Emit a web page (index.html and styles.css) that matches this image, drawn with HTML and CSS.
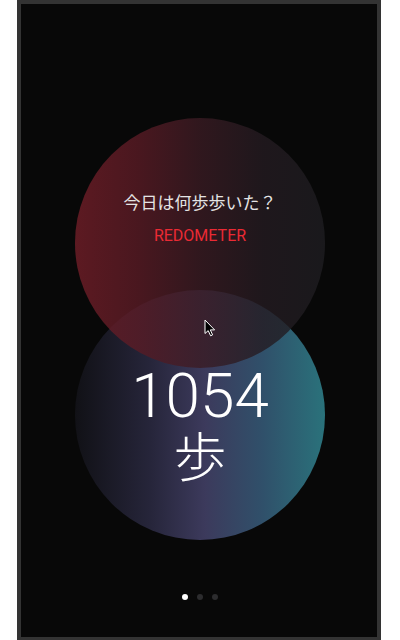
FILE: index.html
```html
<!DOCTYPE html>
<html lang="ja">
<head>
<meta charset="utf-8">
<title>Redometer</title>
<link rel="stylesheet" href="styles.css">
</head>
<body>
<div class="device">
  <main class="screen">
    <div class="circles">
      <section class="circle circle-bottom">
        <div class="count">1054</div>
        <div class="unit">歩</div>
      </section>
      <section class="circle circle-top">
        <p class="question">今日は何歩歩いた？</p>
        <p class="brand">REDOMETER</p>
      </section>
    </div>
    <nav class="dots">
      <span class="dot active"></span>
      <span class="dot"></span>
      <span class="dot"></span>
    </nav>
    <svg class="cursor" width="12" height="18" viewBox="0 0 12 18">
      <path d="M1 1 L1 14.5 L4.2 11.6 L6.6 16.8 L8.6 15.9 L6.3 10.9 L10.6 10.9 Z" fill="#000" stroke="#fff" stroke-width="1"/>
    </svg>
  </main>
</div>
</body>
</html>
```

FILE: styles.css
```css
html, body {
  margin: 0;
  padding: 0;
  background: #ffffff;
  overflow: hidden;
  height: 640px;
}

.device {
  margin-left: 17px;
  width: 356px;
  height: 633px;
  border: 4px solid #333333;
  background: #080808;
}

.screen {
  position: relative;
  height: 100%;
  display: flex;
  flex-direction: column;
  align-items: center;
}

.circles {
  display: flex;
  flex-direction: column-reverse;
  align-items: center;
  margin-top: 114px;
}

.circle {
  width: 250px;
  height: 250px;
  border-radius: 50%;
  box-sizing: border-box;
  display: flex;
  flex-direction: column;
  align-items: center;
  text-align: center;
  margin-left: 2px;
}

.circle-top {
  position: relative;
  background: linear-gradient(90deg,
    rgba(114, 30, 40, 0.8) 0%,
    rgba(90, 27, 37, 0.8) 25%,
    rgba(58, 27, 35, 0.8) 50%,
    rgba(36, 27, 33, 0.8) 75%,
    rgba(30, 29, 33, 0.8) 100%);
  padding-top: 72px;
}

.circle-bottom {
  margin-top: -78px;
  background: linear-gradient(90deg, #111116 0%, #26253a 30%, #3c3a5c 52%, #30506a 75%, #2a727b 100%);
  padding-top: 74px;
}

.question {
  margin: 0;
  font-family: "Noto Sans CJK JP", "Noto Sans", sans-serif;
  font-size: 17px;
  line-height: 24px;
  color: #e4e4e4;
}

.brand {
  margin: 12px 0 0;
  font-family: Roboto, "Noto Sans", sans-serif;
  font-size: 16px;
  line-height: 20px;
  color: #ea2a34;
}

.count {
  font-family: Roboto, "Noto Sans", sans-serif;
  font-weight: 300;
  font-size: 62px;
  line-height: 64px;
  color: #ffffff;
}

.unit {
  font-family: "Noto Sans CJK JP", sans-serif;
  font-weight: 300;
  font-size: 53px;
  line-height: 52px;
  color: #ffffff;
}

.dots {
  display: flex;
  gap: 9px;
  margin-top: 54px;
  margin-left: 2px;
}

.dot {
  width: 6px;
  height: 6px;
  border-radius: 50%;
  background: #2c2c2e;
}

.dot.active {
  background: #ffffff;
}

.cursor {
  position: absolute;
  left: 183px;
  top: 315px;
}
```
